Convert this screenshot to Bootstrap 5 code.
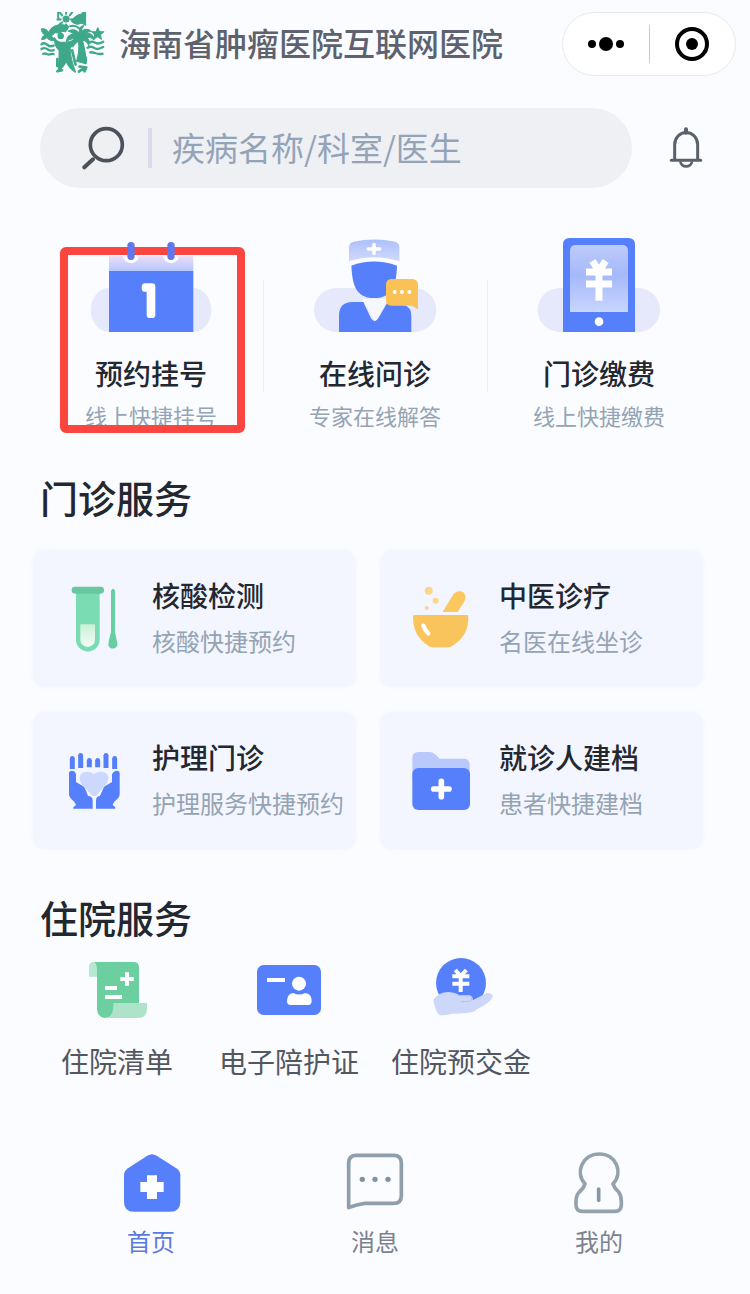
<!DOCTYPE html>
<html lang="zh-CN">
<head>
<meta charset="utf-8">
<meta name="viewport" content="width=device-width, initial-scale=1">
<title>海南省肿瘤医院互联网医院</title>
<link href="https://cdn.jsdelivr.net/npm/bootstrap@5.3.0/dist/css/bootstrap.min.css" rel="stylesheet">
<style>
  :root { --ink:#23272f; --soft:#94a4b3; --blue:#557ffb; --pale:#e6eafc; --green:#6fcf9f; --gold:#fac45c; }
  body { background:#fbfcff; color:var(--ink); font-family:"Noto Sans CJK SC",sans-serif; }
  a { color:inherit; text-decoration:none; }
  svg { display:block; flex:none; }
  .topbar { padding:12px 14px 0 40px; }
  .site-title { font-size:32px; line-height:60px; padding-bottom:4px; font-weight:500; color:#5d626e; margin-left:14px; }
  .capsule { width:174px; height:64px; background:#fff; border:1px solid #e9eaec; border-radius:32px; }
  .capsule button { flex:1; height:38px; padding:0; border:0; background:none; display:flex; align-items:center; justify-content:center; }
  .capsule button + button { border-left:1px solid #c9cacc; }
  .search-row { padding:32px 46px 0 40px; gap:36px; }
  .search-box { height:80px; border-radius:40px; background:#eff0f4; padding:0 24px 0 42px; }
  .search-sep { width:4px; height:40px; background:#d8d9ea; margin:0 20px 0 22px; flex:none; }
  .search-box input { border:0; background:none; outline:0; padding:0; font-size:33px; min-width:0; color:var(--ink); }
  .search-box input::placeholder { color:#93a4b9; opacity:1; }
  .icon-btn { border:0; padding:0; background:none; }
  .thirds { display:grid; grid-template-columns:repeat(3,1fr); padding:0 39px; }
  .entries { margin-top:50px; }
  .entry { display:flex; flex-direction:column; align-items:center; position:relative; }
  .entry + .entry::before { content:""; position:absolute; left:0; top:42px; height:112px; width:1px; background:#eceef5; }
  .entry svg { margin-bottom:20px; position:relative; z-index:2; }
  .entry-name { font-size:28px; line-height:42px; font-weight:500; }
  .entry-note { font-size:22px; line-height:42px; color:var(--soft); }
  .marker { position:absolute; z-index:1; left:21px; top:9px; width:185px; height:186px; border:8px solid #fb4640; border-radius:6px; }
  h2.section { font-size:38px; line-height:50px; font-weight:500; margin:36px 40px 28px; }
  h2.section.second { margin:43px 40px 16px; }
  .services { display:grid; grid-template-columns:1fr 1fr; gap:25px 24px; padding:0 47px 0 33px; }
  .service { height:137px; padding-left:32px; gap:29px; border-radius:12px; background:#f3f5ff; box-shadow:0 0 4px #f3f5ff; }
  .service-name { font-size:28px; line-height:46px; font-weight:500; }
  .service-note { font-size:24px; line-height:46px; color:var(--soft); white-space:nowrap; }
  .service-text { padding-bottom:2px; }
  .ward { display:grid; grid-template-columns:repeat(3,1fr); padding:0 203px 0 31px; }
  .ward a, .tabs a { display:flex; flex-direction:column; align-items:center; }
  .ward span { font-size:28px; line-height:40px; margin-top:23px; color:#535860; white-space:nowrap; }
  .tabs { margin-top:71px; padding-bottom:32px; }
  .tabs span { font-size:24px; line-height:40px; margin-top:5px; color:#7a828e; }
  .tabs .current span { color:#5b7ade; }
</style>
</head>
<body>
<header class="topbar d-flex align-items-center">
  <svg width="65" height="64" viewBox="-1 6 192 190" fill="#3fa88a" stroke="#3fa88a" stroke-width="3" stroke-linecap="round" stroke-linejoin="round" aria-hidden="true">
    <circle cx="76" cy="27" r="9"/>
    <g stroke-width="6" fill="none"><path d="M76 11V3M64 16l-9-11M60 28H50M64 37l-8 6M87 16l9-12M90 28h5M76 43v4"/></g>
    <path d="M92 34c8-14 18-20 28-21l14-13v45c-8-5-12-6-16-5-8 4-16 3-26-6z"/>
    <path d="M24 66c12-22 36-28 60-17-2 7-5 10-10 16-8-3-12 0-18 4-12-2-20-2-32-3z"/>
    <path d="M88 48c12-3 20 0 26 6M52 6c2 8-2 12 2 20M56 44c8 2 14 4 22 2" stroke-width="6" fill="none"/>
    <path d="M116 72c-6-12-20-18-34-9 10 1 14 5 17 9-14 0-22 10-22 22 8-8 17-9 24-8-7 6-8 14-5 24 5-10 10-14 17-18 2 18 1 38-6 60l28 8c2-26-6-50-10-70 7 1 14 4 18 16 5-12 0-20-8-25 8-1 15 0 24 7-2-15-13-21-26-18 4-5 9-6 18-6-10-11-24-8-31 3 0-9 3-14 9-22-12 2-16 14-13 27z"/>
    <path d="M170 53l5 11 13 1-10 8 3 14-11-8-13 8 4-14-9-8 13-1z"/>
    <g fill="none" stroke-width="7"><path d="M146 97c8-7 12-2 18 1s12 2 22-4M140 112c9-6 15-3 22 2s14 1 24-4M148 126c10-3 18 8 36 4"/>
    <path d="M3 102c6-6 12-3 18 2s10 5 18 2M3 116c8-6 13-3 20 2s10 3 16 1M8 130c8-3 12 3 18 2s8-3 13-1"/></g>
    <path d="M3 56c14-2 18 5 21 13 4-7 10-8 20-8-2 10-7 13-14 16l15 12c-15 4-22-1-26-8-4 6-9 7-16 6 2-7 5-10 11-12-7-4-11-9-11-19z"/>
    <circle cx="60" cy="77" r="8"/>
    <path d="M42 82c4 10 14 15 26 14 13 0 24-2 35-10-1 13-9 21-15 27 0 23 6 44 16 72-13-8-22-18-28-32-4 10-12 20-24 29 2-24 4-40 3-62-9-8-15-20-13-38z"/>
    <path d="M50 146v20M50 182l14-3M116 168l20 3M114 183c8-9 12-2 20-7M134 142v14M131 182v-4M94 120l10 42" fill="none" stroke-width="8"/>
  </svg>
  <div class="site-title flex-grow-1">海南省肿瘤医院互联网医院</div>
  <div class="capsule d-flex align-items-center">
    <button type="button" aria-label="更多"><svg width="40" height="16" viewBox="0 0 40 16"><circle cx="6" cy="8" r="4"/><circle cx="20" cy="8" r="7"/><circle cx="34" cy="8" r="4"/></svg></button>
    <button type="button" aria-label="关闭"><svg width="36" height="36" viewBox="0 0 36 36"><circle cx="18" cy="18" r="15" fill="none" stroke="#000" stroke-width="4"/><circle cx="18" cy="18" r="6"/></svg></button>
  </div>
</header>

<div class="search-row d-flex align-items-center">
  <form class="search-box d-flex align-items-center flex-grow-1" role="search">
    <svg width="44" height="44" viewBox="158 78 132 132" fill="none" stroke="#4b525b" aria-hidden="true"><circle cx="231" cy="134" r="48" stroke-width="11"/><path d="M165 202l26-24" stroke-width="12" stroke-linecap="round"/></svg>
    <span class="search-sep"></span>
    <input class="flex-grow-1" type="text" aria-label="搜索" placeholder="疾病名称/科室/医生">
  </form>
  <button class="icon-btn" type="button" aria-label="通知"><svg width="36" height="44" viewBox="384 378 108 132" fill="none" stroke="#59616b" stroke-width="9"><path d="M404 480V434a34 36 0 0 1 69 0V480"/><path d="M394 481H482" stroke-linecap="round"/><path d="M438 398V388" stroke-width="12" stroke-linecap="round"/><path d="M421 484c2 20 33 20 35 0" stroke-width="8"/></svg></button>
</div>

<nav class="thirds entries">
  <a class="entry" href="#">
    <span class="marker"></span>
    <svg width="124" height="94" viewBox="117 24 372 282" aria-hidden="true">
      <defs><linearGradient id="calTop" x1="0" y1="0" x2="0" y2="1"><stop offset="0" stop-color="#e9dcf8"/><stop offset="1" stop-color="#b4c7fc"/></linearGradient></defs>
      <path d="M177 173V306C104 300 104 180 177 173ZM430 173V306C502 300 502 180 430 173Z" fill="#e6e9fc"/>
      <path d="M177 79H430V124H177Z" fill="url(#calTop)"/><path d="M177 123H430V306H177Z" fill="#557ffb"/>
      <path d="M220 79a23 20 0 0 0 46 0ZM340 79a23 20 0 0 0 46 0Z" fill="#fff"/>
      <path d="M243 47V79M363 47V79" stroke="#6177ee" stroke-width="22" stroke-linecap="round"/>
      <path d="M283 160H306q10 0 10 10V254q0 10-10 10H300q-10 0-10-10V185H283q-8 0-8-12t8-13Z" fill="#fff"/>
    </svg>
    <span class="entry-name">预约挂号</span><span class="entry-note">线上快捷挂号</span>
  </a>
  <a class="entry" href="#">
    <svg width="124" height="94" viewBox="69 24 372 282" aria-hidden="true">
      <defs><linearGradient id="cap" x1="0" y1="0" x2="0" y2="1"><stop offset="0" stop-color="#adc0fb"/><stop offset="1" stop-color="#d0dafd"/></linearGradient></defs>
      <rect x="72" y="174" width="367" height="132" rx="66" fill="#e6e9fc"/>
      <path d="M215 206H295L256 276Z" fill="#fff" opacity=".65"/>
      <path d="M177 94V52Q177 39 190 35Q252 22 315 35Q328 39 328 52V94Q252 70 177 94Z" fill="url(#cap)"/>
      <path d="M252 44V70M235 57H269" stroke="#fff" stroke-width="11" stroke-linecap="round"/>
      <path d="M184 107Q252 82 321 107C319 158 311 204 252 204C194 204 187 158 184 107Z" fill="#557ffb"/>
      <path d="M147 306V258Q147 216 187 216H220L243 265Q254 282 265 265L291 220L340 225Q364 230 364 258V306Z" fill="#557ffb"/>
      <path d="M304 147H366Q384 147 384 165V238L366 227H304Q288 227 288 210V165Q288 147 304 147Z" fill="#f9c156"/>
      <g fill="#fff"><circle cx="314" cy="186" r="6"/><circle cx="336" cy="186" r="6"/><circle cx="358" cy="186" r="6"/></g>
    </svg>
    <span class="entry-name">在线问诊</span><span class="entry-note">专家在线解答</span>
  </a>
  <a class="entry" href="#">
    <svg width="124" height="94" viewBox="81 24 372 282" aria-hidden="true">
      <defs><linearGradient id="screen" x1="0" y1="0" x2="0" y2="1"><stop offset="0" stop-color="#bccbfb"/><stop offset=".45" stop-color="#a5b9fa"/><stop offset="1" stop-color="#c8d5fd"/></linearGradient></defs>
      <rect x="83" y="174" width="367" height="132" rx="66" fill="#e6e9fc"/>
      <path d="M159 306V44Q159 24 179 24H355Q375 24 375 44V306Z" fill="#557ffb"/>
      <path d="M180 246V62Q180 45 197 45H337Q354 45 354 62V246Z" fill="url(#screen)"/>
      <path d="M247 93L267 123L287 93M228 126H306M228 162H306M267 120V212" fill="none" stroke="#fff" stroke-width="21"/>
      <circle cx="267" cy="275" r="13" fill="#fff"/>
    </svg>
    <span class="entry-name">门诊缴费</span><span class="entry-note">线上快捷缴费</span>
  </a>
</nav>

<h2 class="section">门诊服务</h2>
<div class="services">
  <a class="service d-flex align-items-center" href="#">
    <svg width="58" height="66" viewBox="135 137 174 198" aria-hidden="true">
      <defs><linearGradient id="fluid" x1="0" y1="0" x2="0" y2="1"><stop offset="0" stop-color="#c9f1d8"/><stop offset="1" stop-color="#f3fcf6"/></linearGradient></defs>
      <path d="M168 150H239V298a35 35 0 0 1-71 0Z" fill="#79dcb3"/><rect x="155" y="139" width="97" height="21" rx="10" fill="#67c8a0"/>
      <path d="M181 252H225V298a22 22 0 0 1-44 0Z" fill="url(#fluid)"/>
      <path d="M273 151q6-12 12 0V275L292 308a13 13 0 0 1-27 6Q265 304 273 275Z" fill="#67cfa2"/>
    </svg>
    <div class="service-text d-flex flex-column"><span class="service-name">核酸检测</span><span class="service-note">核酸快捷预约</span></div>
  </a>
  <a class="service d-flex align-items-center" href="#">
    <svg width="58" height="66" viewBox="127 137 174 198" aria-hidden="true">
      <path d="M134 224H292Q296 224 296 230C296 268 284 294 246 318Q242 321 236 321H188Q182 321 178 318C142 294 131 268 130 230Q130 224 134 224Z" fill="#fac45c"/>
      <path d="M219 215L248 167C260 144 291 151 287 174Q286 180 283 185L264 215Z" fill="#fbc85f"/>
      <g fill="#fcd689"><circle cx="177" cy="151" r="12"/><circle cx="198" cy="181" r="9"/><circle cx="171" cy="203" r="6"/></g>
      <path d="M161 256Q165 270 176 279" fill="none" stroke="#fff" stroke-width="13" stroke-linecap="round"/>
    </svg>
    <div class="service-text d-flex flex-column"><span class="service-name">中医诊疗</span><span class="service-note">名医在线坐诊</span></div>
  </a>
  <a class="service d-flex align-items-center" href="#">
    <svg width="58" height="66" viewBox="135 624 174 198" aria-hidden="true">
      <g stroke="#557ffb" stroke-width="15"><path d="M157 655V687M182 646V684M208 661V682M233 661V682M258 646V684M284 655V687"/></g>
      <g fill="#557ffb"><circle cx="157" cy="655" r="7"/><circle cx="182" cy="646" r="7"/><circle cx="208" cy="661" r="7"/><circle cx="233" cy="661" r="7"/><circle cx="258" cy="646" r="7"/><circle cx="284" cy="655" r="7"/></g>
      <g fill="#557ffb"><path d="M147 700Q147 692 155 692Q166 693 168 703V726L192 740Q200 754 204 768Q218 768 218 782V806H160Q158 801 168 796C165 780 147 778 147 762Z"/><path d="M299 700Q299 692 291 692Q280 693 276 703V726L252 740Q246 754 240 768Q228 768 228 782V806H286Q288 801 278 796C281 780 299 778 299 762Z"/></g>
      <path d="M222 703C234 690 266 692 265 715C264 736 238 752 228 768H217C206 752 180 736 179 715C178 692 210 690 222 703Z" fill="#ccd8fd"/>
    </svg>
    <div class="service-text d-flex flex-column"><span class="service-name">护理门诊</span><span class="service-note">护理服务快捷预约</span></div>
  </a>
  <a class="service d-flex align-items-center" href="#">
    <svg width="58" height="66" viewBox="126 624 174 198" aria-hidden="true">
      <path d="M127 720V655Q127 636 145 636H178Q188 636 195 643L209 656H281Q299 656 299 675V720Z" fill="#b9c9fc"/>
      <rect x="127" y="684" width="173" height="126" rx="18" fill="#557ffb"/>
      <path d="M214 724V770M191 747H237" stroke="#fff" stroke-width="17" stroke-linecap="round"/>
    </svg>
    <div class="service-text d-flex flex-column"><span class="service-name">就诊人建档</span><span class="service-note">患者快捷建档</span></div>
  </a>
</div>

<h2 class="section second">住院服务</h2>
<div class="ward">
  <a href="#">
    <svg width="64" height="60" viewBox="105 54 192 180" aria-hidden="true">
      <path d="M117 110V80Q117 66 131 66H160L150 110Z" fill="#b5e8ce"/>
      <path d="M133 66H251Q267 66 267 82V210L164 234Q141 230 141 206V90Q141 72 133 66Z" fill="#6bcfa0"/>
      <path d="M164 234Q190 230 190 200V189H291V206Q291 234 263 234Z" fill="#aee3ca"/>
      <path d="M231 97V137M211 117H251M165 144H201M165 171H216" stroke="#fff" stroke-width="12"/>
    </svg><span>住院清单</span>
  </a>
  <a href="#">
    <svg width="64" height="60" viewBox="621 54 192 180" aria-hidden="true">
      <rect x="621" y="75" width="192" height="150" rx="20" fill="#557ffb"/><path d="M651 120H705" stroke="#fff" stroke-width="12"/>
      <circle cx="747" cy="131" r="21" fill="#fff"/><path d="M730 159Q747 168 765 159Q785 160 785 184Q785 195 774 195H722Q711 195 711 184Q712 160 730 159Z" fill="#fff"/>
    </svg><span>电子陪护证</span>
  </a>
  <a href="#">
    <svg width="64" height="60" viewBox="177 54 192 180" aria-hidden="true">
      <circle cx="273" cy="129" r="75" fill="#557ffb"/>
      <path d="M256 90L272 108L289 90M247 109H298M247 131H298M272 107V156" fill="none" stroke="#fff" stroke-width="12"/>
      <path d="M190 180Q206 155 238 156Q255 158 268 165L300 166Q311 172 308 181L350 159Q363 157 369 168Q363 184 340 197Q318 210 306 217Q275 222 244 221Q225 228 208 225Q193 208 190 180Z" fill="#ccd7fa"/>
      <path d="M264 166L299 168Q311 178 300 184L273 185" fill="none" stroke="#b3c3f6" stroke-width="3"/>
    </svg><span>住院预交金</span>
  </a>
</div>

<nav class="thirds tabs">
  <a class="current" href="#">
    <svg width="60" height="64" viewBox="63 36 180 192" aria-hidden="true"><path d="M142 47Q156 38 170 47L229 85Q241 93 241 106V185Q241 215 211 215H102Q72 215 72 185V106Q72 93 84 85Z" fill="#557ffb"/><path d="M141 106H171V126H191V156H171V177H141V156H121V126H141Z" fill="#fff"/></svg><span>首页</span>
  </a>
  <a href="#">
    <svg width="60" height="64" viewBox="735 36 180 192" aria-hidden="true"><path d="M746 203V69Q746 46 769 46H881Q904 46 904 69V167Q904 190 881 190H794Q770 193 746 203Z" fill="none" stroke="#8e9eab" stroke-width="11" stroke-linejoin="round"/><g fill="#8392a0"><circle cx="787" cy="118" r="8"/><circle cx="825" cy="118" r="8"/><circle cx="864" cy="118" r="8"/></g></svg><span>消息</span>
  </a>
  <a href="#">
    <svg width="60" height="64" viewBox="57 36 180 192" fill="none" stroke="#93a2ad" stroke-width="11" aria-hidden="true"><path d="M105 131C74 98 97 42 148 42C199 42 221 98 189 131Q193 145 205 155Q214 166 214 184V194Q214 214 194 214H98Q78 214 78 194V184Q78 166 88 156Q101 145 105 131Z" stroke-linejoin="round"/><path d="M146 147V181" stroke-linecap="round" stroke="#8797a5"/></svg><span>我的</span>
  </a>
</nav>
<script src="https://cdn.jsdelivr.net/npm/bootstrap@5.3.0/dist/js/bootstrap.bundle.min.js"></script>
</body>
</html>
